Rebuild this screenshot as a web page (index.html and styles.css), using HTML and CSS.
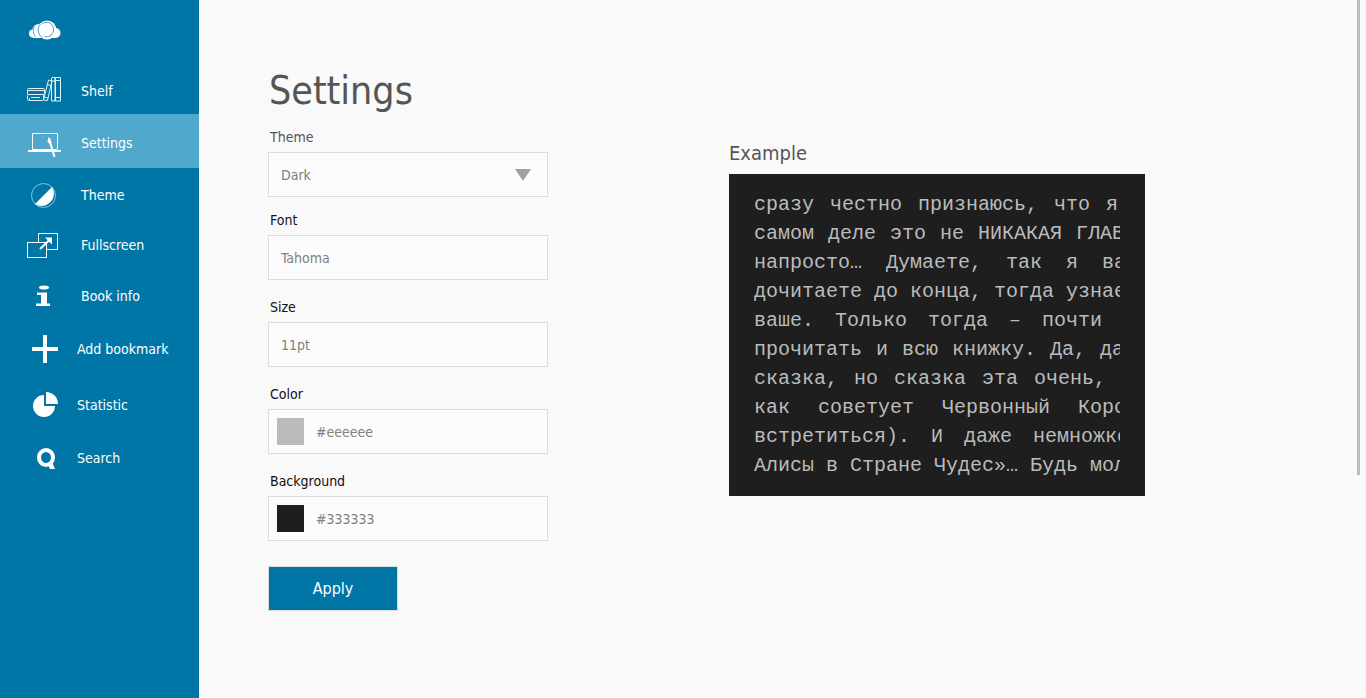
FILE: index.html
```html
<!DOCTYPE html>
<html lang="en">
<head>
<meta charset="utf-8">
<title>Settings</title>
<link rel="stylesheet" href="styles.css">
</head>
<body>
<div class="app">
  <aside class="sidebar">
    <a class="logo" href="#" aria-label="Home">
      <svg class="icon" viewBox="0 0 36 30" aria-hidden="true">
        <g class="cloud">
          <circle cx="7" cy="18.500" r="4"/>
          <circle cx="29.500" cy="18" r="5"/>
          <circle cx="13" cy="16" r="7"/>
          <rect x="7" y="18" width="23" height="5"/>
          <circle cx="21" cy="15" r="9.500"/>
        </g>
        <g class="cloud-lines">
          <path d="M8.500 11.500C6.500 14.500 7 19 9.500 22"/>
          <path d="M14.500 9C11 12.500 11.500 19.500 16.500 23"/>
          <path d="M16 8.500C22.500 5 28.500 9.500 27.500 16C26.500 20.500 22 22.500 18.500 21.500"/>
        </g>
      </svg>
    </a>
    <nav aria-label="Reader">
      <ul class="menu menu-main">
        <li><a class="item" href="#">
          <svg class="icon line soft" viewBox="0 0 36 30" aria-hidden="true">
            <rect x="1.500" y="12.500" width="17" height="6" rx="1"/>
            <rect x="1.500" y="18.500" width="16" height="6" rx="1"/>
            <path d="M2 14.500H18M5 21.500H14M3.500 24V22"/>
            <path d="M17.500 24L22.500 4L26 5L21.500 24.500Z"/>
            <path d="M21 8.500L25 9.500M18.500 21L22 22"/>
            <path d="M25.500 3V25H29V1.500H26Z"/>
            <path d="M29.500 1.500H34.500V25H29.500ZM29.500 4.500H34.500M29.500 21.500H34.500M25.500 5H29"/>
          </svg>
          <span>Shelf</span></a></li>
        <li><a class="item active" href="#" aria-current="page">
          <svg class="icon line" viewBox="0 0 36 30" aria-hidden="true">
            <path d="M6.500 21V5.500H31.500V21"/>
            <path class="thick" d="M2 23H35"/>
            <path d="M6 21.500H31"/>
            <path class="thick" d="M24 14L28.500 29"/>
            <path class="solid" d="M22.500 9L24.500 11L25.500 14.500L24 16L21.500 14Z"/>
          </svg>
          <span>Settings</span></a></li>
        <li><a class="item" href="#">
          <svg class="icon" viewBox="0 0 36 30" aria-hidden="true">
            <circle class="hair" cx="17.500" cy="15.500" r="12"/>
            <path class="solid" d="M9 24A12.300 12.300 0 0 0 26 7Z"/>
          </svg>
          <span>Theme</span></a></li>
        <li><a class="item" href="#">
          <svg class="icon line" viewBox="0 0 36 30" aria-hidden="true">
            <rect x="1.500" y="12.500" width="19" height="15"/>
            <path d="M12.500 12V3.500H31.500V19.500H21"/>
            <path class="thick" d="M14 19L24 9.500"/>
            <path class="solid" d="M19 7.500H26V14.500Z"/>
          </svg>
          <span>Fullscreen</span></a></li>
        <li><a class="item" href="#">
          <svg class="icon" viewBox="0 0 36 30" aria-hidden="true">
            <ellipse class="solid" cx="18" cy="6.500" rx="5" ry="2"/>
            <path class="solid" d="M11 11.500H21V22.500H24V25H10V22.500H15V14H11Z"/>
          </svg>
          <span>Book info</span></a></li>
      </ul>
      <ul class="menu menu-tools">
        <li><a class="item" href="#">
          <svg class="icon" viewBox="0 0 36 30" aria-hidden="true">
            <path class="solid" d="M17 1H21V13H32V17H21V29H17V17H6V13H17Z"/>
          </svg>
          <span>Add bookmark</span></a></li>
        <li><a class="item" href="#">
          <svg class="icon" viewBox="0 0 36 30" aria-hidden="true">
            <path class="solid" d="M18 5A11 11 0 1 0 29 16H18Z"/>
            <path class="solid" d="M20 2A12 12 0 0 1 32 14H20Z"/>
          </svg>
          <span>Statistic</span></a></li>
        <li><a class="item" href="#">
          <svg class="icon" viewBox="0 0 36 30" aria-hidden="true">
            <ellipse class="ring" cx="20" cy="14.500" rx="7" ry="7.500"/>
            <path class="solid" d="M21 20L26 19L29 26H24Z"/>
          </svg>
          <span>Search</span></a></li>
      </ul>
    </nav>
  </aside>

  <main class="content">
    <form class="settings">
      <h1>Settings</h1>
      <div class="group preset">
        <label for="theme">Theme</label>
        <div class="field">
          <select id="theme"><option>Dark</option><option>Light</option></select>
          <svg class="arrow" viewBox="0 0 16 12" aria-hidden="true"><path d="M0 0H16L8 12Z"/></svg>
        </div>
      </div>
      <div class="group">
        <label for="font">Font</label>
        <div class="field"><input id="font" type="text" value="Tahoma"></div>
      </div>
      <div class="group">
        <label for="size">Size</label>
        <div class="field"><input id="size" type="text" value="11pt"></div>
      </div>
      <div class="group">
        <label for="color">Color</label>
        <div class="field"><span class="swatch swatch-text"></span><input id="color" type="text" value="#eeeeee"></div>
      </div>
      <div class="group">
        <label for="background">Background</label>
        <div class="field"><span class="swatch swatch-page"></span><input id="background" type="text" value="#333333"></div>
      </div>
      <button class="apply" type="button">Apply</button>
    </form>

    <section class="example">
      <h2>Example</h2>
      <div class="page">
        <div class="lines" lang="ru">
          <p class="gap-16"><span>сразу</span> <span>честно</span> <span>признаюсь,</span> <span>что</span> <span>я</span></p>
          <p class="gap-14"><span>самом</span> <span>деле</span> <span>это</span> <span>не</span> <span>НИКАКАЯ</span> <span>ГЛАВ</span></p>
          <p class="gap-24"><span>напросто…</span> <span>Думаете,</span> <span>так</span> <span>я</span> <span>ва</span></p>
          <p class="gap-12"><span>дочитаете</span> <span>до</span> <span>конца,</span> <span>тогда</span> <span>узнае</span></p>
          <p class="gap-21"><span>ваше.</span> <span>Только</span> <span>тогда</span> <span>–</span> <span>почти</span></p>
          <p class="gap-14"><span>прочитать</span> <span>и</span> <span>всю</span> <span>книжку.</span> <span>Да,</span> <span>да</span></p>
          <p class="gap-16"><span>сказка,</span> <span>но</span> <span>сказка</span> <span>эта</span> <span>очень,</span></p>
          <p class="gap-28"><span>как</span> <span>советует</span> <span>Червонный</span> <span>Коро</span></p>
          <p class="gap-21"><span>встретиться).</span> <span>И</span> <span>даже</span> <span>немножко</span></p>
          <p class="gap-12"><span>Алисы</span> <span>в</span> <span>Стране</span> <span>Чудес»…</span> <span>Будь</span> <span>мол</span></p>
        </div>
      </div>
    </section>
    <div class="scroll-thumb"></div>
  </main>
</div>
</body>
</html>
```

FILE: styles.css
```css
* { box-sizing: border-box; }

body {
  margin: 0;
  background: #f9f9f9;
  color: #111;
  font-family: "DejaVu Sans Condensed", "Noto Sans", sans-serif;
  font-size: 14px;
  line-height: 22px;
}

h1, h2, p, ul { margin: 0; padding: 0; font-weight: 400; }

.app { display: flex; min-height: 100vh; }

/* Sidebar */
.sidebar { flex: 0 0 199px; background: #0076a6; }
.logo { display: flex; align-items: center; height: 67px; padding: 0 0 7px 26px; }
.menu { display: grid; list-style: none; }
.menu-main { grid-template-rows: 47px 54px 54px 46px 56px; }
.menu-tools { grid-template-rows: 50px 62px 44px; }
.item {
  display: flex;
  align-items: center;
  gap: 19px;
  height: 100%;
  padding-left: 26px;
  color: #fff;
  text-decoration: none;
  white-space: nowrap;
}
.menu-tools .item { gap: 15px; }
.item.active { padding-top: 3px; background: #50a8cd; }

/* Icons */
.icon { flex: none; width: 36px; height: 30px; fill: none; stroke: none; }
.line { stroke: #fff; stroke-width: 1; }
.soft { stroke: #e2f1f7; }
.icon .thick { stroke: #fff; stroke-width: 2; }
.icon .solid { fill: #fff; stroke: none; }
.icon .hair { stroke: #8cc4dc; stroke-width: 1; }
.icon .ring { stroke: #fff; stroke-width: 4; }
.cloud { fill: #fff; }
.cloud-lines { stroke: #4a9dc2; stroke-width: 1; }

/* Content */
.content {
  position: relative;
  flex: 1;
  display: flex;
  align-items: flex-start;
  gap: 181px;
  padding: 66px 24px 24px 69px;
}
.settings { flex: 0 1 280px; }
h1 { padding-left: 1px; color: #555; font-size: 39px; line-height: 50px; }
.group { margin-bottom: 16px; }
.preset { margin: 10px 0 12px; }
.preset label { color: #555; }
label { display: block; margin-bottom: 4px; padding-left: 2px; }

.field {
  position: relative;
  display: flex;
  align-items: center;
  height: 45px;
  border: 1px solid #dcdcdc;
  background: #fcfcfc;
}
.field input, .field select {
  flex: 1;
  width: 100%;
  min-width: 0;
  height: 100%;
  padding: 0 12px;
  border: 0;
  background: none;
  color: #808080;
  font: inherit;
  appearance: none;
}
.arrow {
  position: absolute;
  right: 16px;
  width: 16px;
  height: 12px;
  fill: #a0a0a0;
  pointer-events: none;
}
.swatch { flex: none; width: 27px; height: 27px; margin-left: 8px; }
.swatch-text { background: #bbb; }
.swatch-page { background: #1e1e1e; }

.apply {
  width: 130px;
  height: 45px;
  margin-top: 9px;
  border: 1px solid #dcdcdc;
  background: #0076a6;
  color: #fff;
  font: inherit;
  font-size: 16px;
}

/* Preview */
.example { flex: 0 1 416px; min-width: 0; padding-top: 73px; }
h2 { color: #555; font-size: 20px; line-height: 28px; margin-bottom: 7px; }
.page { padding: 16px 25px; background: #1e1e1e; }
.lines {
  overflow: hidden;
  color: #bbb;
  font-family: "Courier New", "Liberation Mono", monospace;
  font-size: 20px;
  line-height: 29px;
  white-space: nowrap;
}
.lines p { display: flex; }
.gap-12 { gap: 12px; }
.gap-14 { gap: 14px; }
.gap-16 { gap: 16px; }
.gap-21 { gap: 21px; }
.gap-24 { gap: 24px; }
.gap-28 { gap: 28px; }

.scroll-thumb {
  position: absolute;
  top: 0;
  right: 6px;
  width: 3px;
  height: 68%;
  background: #bbb;
}
```
